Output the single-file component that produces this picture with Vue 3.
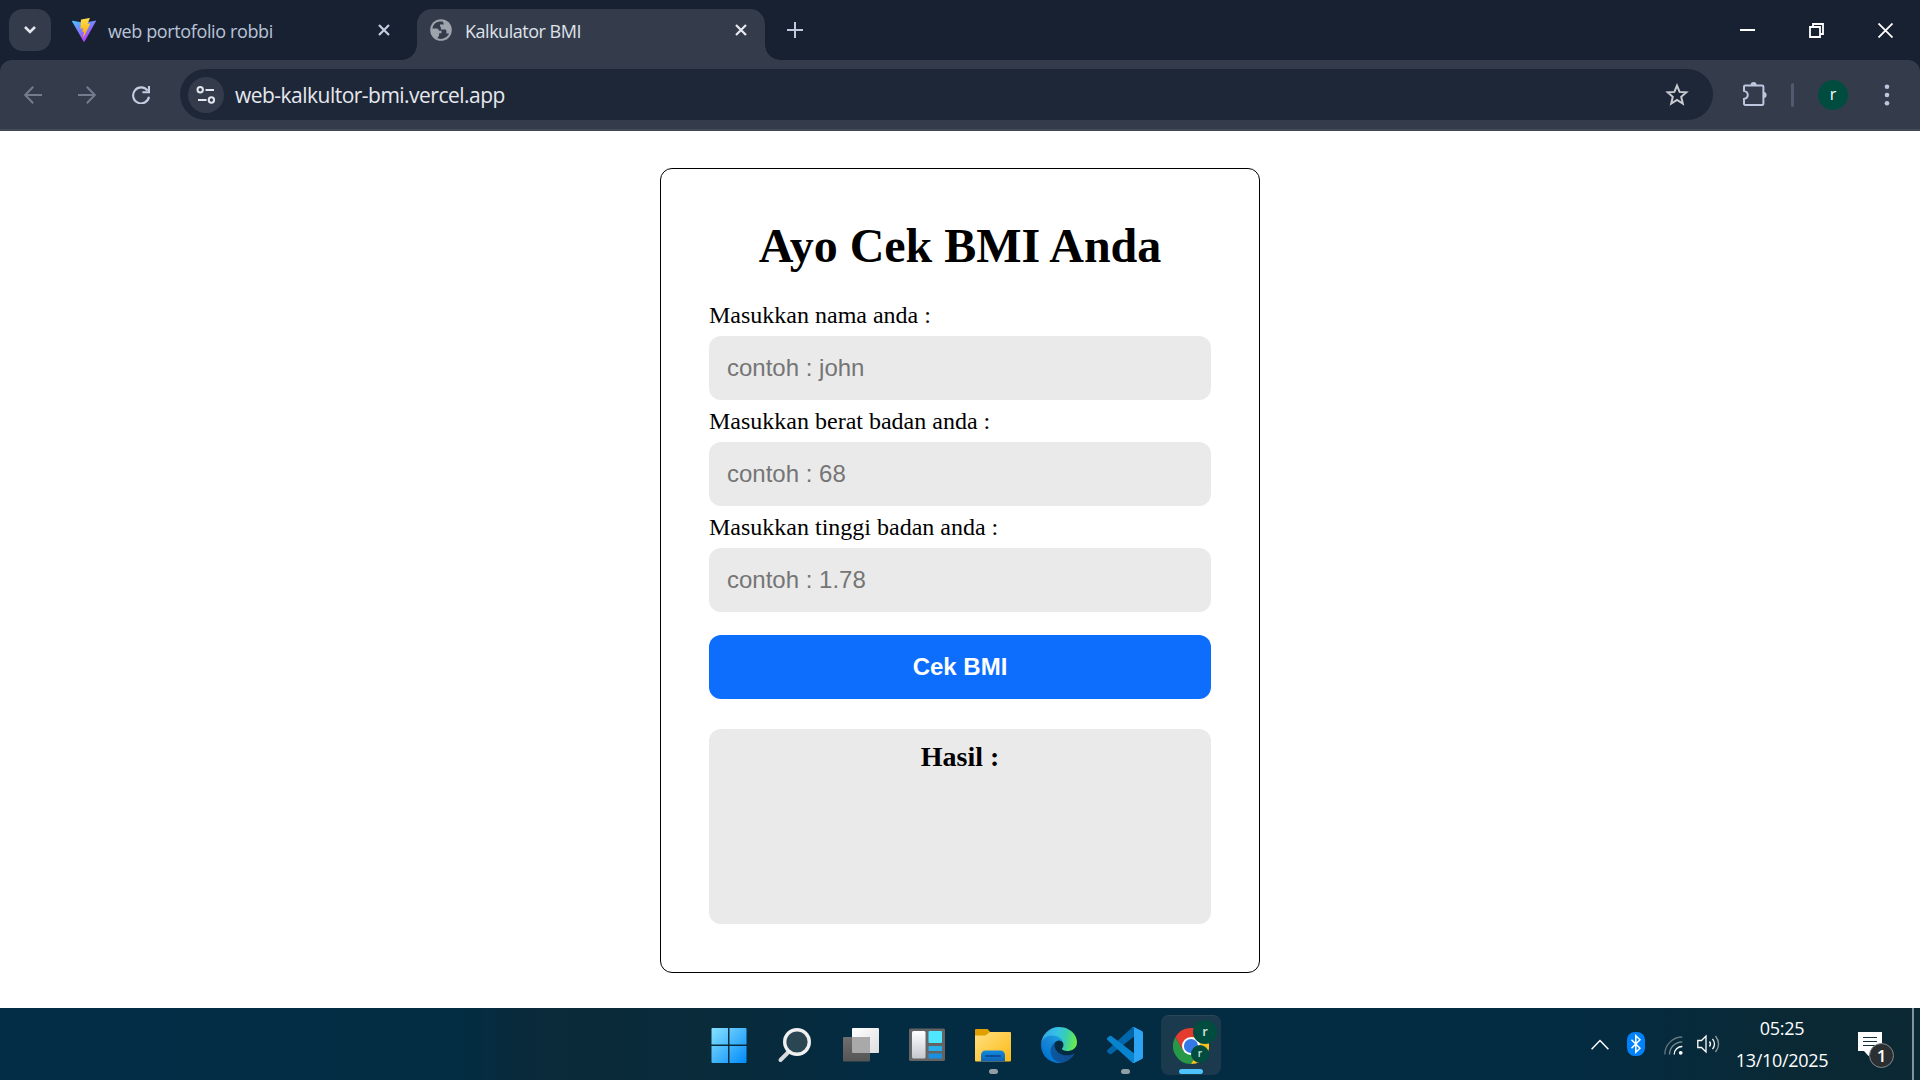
<script setup>
import { reactive } from 'vue'

const fields = [
  { key: 'nama', label: 'Masukkan nama anda :', hint: 'contoh : john' },
  { key: 'berat', label: 'Masukkan berat badan anda :', hint: 'contoh : 68' },
  { key: 'tinggi', label: 'Masukkan tinggi badan anda :', hint: 'contoh : 1.78' }
]
const form = reactive({ nama: '', berat: '', tinggi: '' })
</script>

<template>
  <div class="screen">
    <header class="tabs">
      <div class="tab-search">
        <svg width="14" height="10" viewBox="0 0 14 10"><path d="M2 2l5 5 5-5" fill="none" stroke="#e3e6ee" stroke-width="2.6" /></svg>
      </div>
      <div class="tab">
        <svg class="favicon" width="24" height="24" viewBox="0 0 24 24">
          <defs>
            <linearGradient id="viteA" x1="0" y1="0" x2=".6" y2="1"><stop offset="0" stop-color="#41c8ff" /><stop offset="1" stop-color="#bd34fe" /></linearGradient>
            <linearGradient id="viteB" x1="0" y1="0" x2="0" y2="1"><stop offset="0" stop-color="#ffe04a" /><stop offset="1" stop-color="#ffa800" /></linearGradient>
          </defs>
          <path d="M23.8 3.6L12.6 23.5a.6.6 0 0 1-1.1 0L.1 3.6a.6.6 0 0 1 .7-.9l11.2 2 11-2a.6.6 0 0 1 .8.9z" fill="url(#viteA)" />
          <path d="M17.4 0L9.2 1.6a.4.4 0 0 0-.3.3l-.5 8.6c0 .2.2.4.4.3l2.3-.5-.7 3.4c0 .2.2.4.4.3l1.4-.4-1.1 5.2c-.1.4.4.5.6.2l6.4-13c.1-.2-.1-.4-.3-.4l-2.4.5L17.8.4c0-.2-.2-.4-.4-.4z" fill="url(#viteB)" />
        </svg>
        <span class="tab-title t1">web portofolio robbi</span>
        <svg class="tab-close" width="12" height="12" viewBox="0 0 12 12"><path d="M1 1l10 10M11 1L1 11" stroke="#c5cde0" stroke-width="2.2" /></svg>
      </div>
      <div class="tab active">
        <svg class="favicon" width="22" height="22" viewBox="0 0 22 22">
          <circle cx="11" cy="11" r="10.8" fill="#9fa4ac" />
          <path d="M9.400 2.400A8.800 8.800 0 0 0 2.300 9.400h4.200c1.600 0 2.400.9 2.400 2.400h2.600v2.400H9.100v2.200c-.4 1.100-1.100 1.600-1.800 2.600a8.900 8.900 0 0 0 9.300-1.200c1.100-.9 2-2.100 2.500-3.400h-2.700v-2.200c0-1-.5-1.600-1.500-1.600h-4V7.800h-.9V5.600h3.600c.5-1.200-.4-2.100-1.200-3.200z" fill="#343c4c" />
        </svg>
        <span class="tab-title t2">Kalkulator BMI</span>
        <svg class="tab-close" width="12" height="12" viewBox="0 0 12 12"><path d="M1 1l10 10M11 1L1 11" stroke="#e8eaf2" stroke-width="2.2" /></svg>
      </div>
      <svg class="plus" width="16" height="16" viewBox="0 0 16 16"><path d="M8 0v16M0 8h16" stroke="#c0c8dc" stroke-width="2" /></svg>
      <div class="window-buttons">
        <svg width="15" height="15" viewBox="0 0 15 15"><path d="M0 7h15" stroke="#fff" stroke-width="2" /></svg>
        <svg width="15" height="15" viewBox="0 0 15 15"><path d="M1 4h10v10H1zM4 4V1h10v10h-3" fill="none" stroke="#fff" stroke-width="1.8" /></svg>
        <svg width="15" height="15" viewBox="0 0 15 15"><path d="M.5.5l14 14M14.5.5l-14 14" stroke="#fff" stroke-width="1.8" /></svg>
      </div>
    </header>

    <div class="strip">
      <nav class="toolbar">
        <svg class="nav-icon" width="18" height="18" viewBox="0 0 18 18"><path d="M18 9H1.500M9.200 .8L1.200 9l8 8.200" fill="none" stroke="#737b8c" stroke-width="2" /></svg>
        <svg class="nav-icon" width="18" height="18" viewBox="0 0 18 18"><path d="M0 9h16.500M8.800 .8l8 8.200-8 8.200" fill="none" stroke="#737b8c" stroke-width="2" /></svg>
        <svg class="nav-icon" width="18" height="18" viewBox="0 0 18 18"><path d="M15.600 4.700A8 8 0 1 0 17 10.800M17 0v6.200h-6.600" fill="none" stroke="#c3cce0" stroke-width="2.100" /></svg>
        <div class="address">
          <div class="site-info">
            <svg width="20" height="18" viewBox="0 0 20 18"><g fill="none" stroke="#e3e6ee" stroke-width="2"><circle cx="4.200" cy="3.800" r="2.700" /><path d="M9.500 4H18M2 14h8.500" /><circle cx="15.400" cy="14" r="2.700" /></g></svg>
          </div>
          <span class="url">web-kalkultor-bmi.vercel.app</span>
          <svg class="star" width="24" height="24" viewBox="0 0 24 24"><path d="M12 2.600l2.600 6.300 6.700.5-5.100 4.400 1.600 6.700-5.800-3.600-5.800 3.600 1.600-6.700L2.700 9.400l6.700-.5z" fill="none" stroke="#c8cad0" stroke-width="2" /></svg>
        </div>
        <svg class="puzzle" width="26" height="26" viewBox="0 0 26 26">
          <path d="M3.200 4.500h17a1.200 1.200 0 0 1 1.200 1.200v17a1.200 1.200 0 0 1-1.200 1.200h-17A1.200 1.200 0 0 1 2 22.700v-4.800c5-1.200 5-6.800 0-8V5.700a1.200 1.200 0 0 1 1.200-1.200z" fill="none" stroke="#bcc6de" stroke-width="2" />
          <path d="M8.600 4a3 3 0 0 1 6 0zM21.600 11a3 3 0 0 1 0 6z" fill="#bcc6de" />
        </svg>
        <i class="divider"></i>
        <span class="avatar">r</span>
        <svg class="dots" width="6" height="22" viewBox="0 0 6 22"><g fill="#bcc6de"><circle cx="3" cy="2.800" r="2.300" /><circle cx="3" cy="11" r="2.300" /><circle cx="3" cy="19.200" r="2.300" /></g></svg>
      </nav>
    </div>

    <main class="page">
      <section class="card">
        <h1>Ayo Cek BMI Anda</h1>
        <div v-for="f in fields" :key="f.key" class="field">
          <label :for="f.key">{{ f.label }}</label>
          <input :id="f.key" v-model="form[f.key]" :placeholder="f.hint" autocomplete="off" />
        </div>
        <button type="button">Cek BMI</button>
        <div class="result"><h3>Hasil :</h3></div>
      </section>
    </main>

    <footer class="taskbar">
      <div class="apps">
        <div class="app">
          <svg class="start" width="36" height="36" viewBox="0 0 36 36">
            <defs><linearGradient id="win" x1="0" y1="0" x2="36" y2="36" gradientUnits="userSpaceOnUse"><stop offset="0" stop-color="#8be3ff" /><stop offset="1" stop-color="#008bfa" /></linearGradient></defs>
            <path d="M1.500 1H17v16.500H.5V2a1 1 0 0 1 1-1zM18.500 1h16a1 1 0 0 1 1 1v15.500h-17zM.5 19H17v17H1.500a1 1 0 0 1-1-1zM18.500 19h17v16a1 1 0 0 1-1 1h-16z" fill="url(#win)" />
          </svg>
        </div>
        <div class="app">
          <svg width="36" height="36" viewBox="0 0 36 36"><path d="M12 24.500L3.500 33" stroke="#d9dadb" stroke-width="4" stroke-linecap="round" /><circle cx="20" cy="15" r="12.300" fill="#2b4653" stroke="#f0f0f0" stroke-width="3.400" /></svg>
        </div>
        <div class="app">
          <svg width="36" height="36" viewBox="0 0 36 36">
            <defs>
              <linearGradient id="tv" x1="0" y1="0" x2="1" y2="1"><stop offset="0" stop-color="#fff" /><stop offset="1" stop-color="#dedede" /></linearGradient>
              <linearGradient id="tb" x1="0" y1="0" x2="0" y2="1"><stop offset="0" stop-color="#6e6e6e" /><stop offset="1" stop-color="#555" /></linearGradient>
            </defs>
            <rect x="9" y="1" width="27" height="25" rx="1" fill="url(#tv)" />
            <rect y="10" width="27" height="24.500" rx="1" fill="url(#tb)" />
            <path d="M9 10h17a1 1 0 0 1 1 1v15H10a1 1 0 0 1-1-1z" fill="#a9a9a9" />
          </svg>
        </div>
        <div class="app">
          <svg width="36" height="36" viewBox="0 0 36 36">
            <defs><linearGradient id="wd" x1="0" y1="0" x2="0" y2="1"><stop offset="0" stop-color="#fff" /><stop offset="1" stop-color="#c3c8ce" /></linearGradient></defs>
            <rect y="1.500" width="36" height="32.500" rx="1.500" fill="#646464" />
            <rect x="3" y="4" width="13.500" height="27.500" rx="1.500" fill="url(#wd)" />
            <rect x="19.500" y="4" width="13.500" height="12" rx="1" fill="#50e6ff" />
            <rect x="19.500" y="19" width="13.500" height="5" rx=".8" fill="#29aeea" />
            <rect x="19.500" y="26.500" width="13.500" height="5" rx=".8" fill="#1b90e0" />
          </svg>
        </div>
        <div class="app">
          <svg width="36" height="36" viewBox="0 0 36 36">
            <defs>
              <linearGradient id="fo" x1="0" y1="0" x2="1" y2="1"><stop offset="0" stop-color="#ffe183" /><stop offset="1" stop-color="#fdb913" /></linearGradient>
              <linearGradient id="fb" x1="0" y1="0" x2="0" y2="1"><stop offset="0" stop-color="#128be0" /><stop offset="1" stop-color="#0f63b4" /></linearGradient>
            </defs>
            <path d="M0 3a1 1 0 0 1 1-1h10.500c1 0 1.700.5 2.300 1.200L16 6v5H0z" fill="#e0a000" />
            <path d="M0 8.500h9c1.200 0 2-.4 2.800-1.100l1.700-1.500c.7-.7 1.500-.9 2.300-.9H35a1 1 0 0 1 1 1v27.500a1 1 0 0 1-1 1H1a1 1 0 0 1-1-1z" fill="url(#fo)" />
            <path d="M6 34.500V28a4.500 4.500 0 0 1 4.500-4.500h15A4.500 4.500 0 0 1 30 28v6.500z" fill="url(#fb)" />
            <path d="M11 29h14" stroke="#0b4f96" stroke-width="2" stroke-linecap="round" />
          </svg>
          <i class="mark"></i>
        </div>
        <div class="app">
          <svg width="36" height="36" viewBox="0 0 256 256">
            <defs>
              <linearGradient id="e1" x1="63" y1="177" x2="241" y2="177" gradientUnits="userSpaceOnUse"><stop offset="0" stop-color="#0c59a4" /><stop offset="1" stop-color="#114a8b" /></linearGradient>
              <linearGradient id="e2" x1="157" y1="100" x2="46" y2="221" gradientUnits="userSpaceOnUse"><stop offset="0" stop-color="#1b9de2" /><stop offset=".5" stop-color="#1684d4" /><stop offset="1" stop-color="#0078d4" /></linearGradient>
              <linearGradient id="e3" x1="10" y1="60" x2="245" y2="110" gradientUnits="userSpaceOnUse"><stop offset="0" stop-color="#31a8df" /><stop offset=".4" stop-color="#35c1e8" /><stop offset=".7" stop-color="#39cfac" /><stop offset="1" stop-color="#68ea4c" /></linearGradient>
            </defs>
            <path d="M231 190.500a93.700 93.700 0 0 1-10.500 4.700 101.900 101.900 0 0 1-35.900 6.500c-47.300 0-88.500-32.600-88.500-74.300a31.500 31.500 0 0 1 16.400-27.300c-42.800 1.800-53.800 46.400-53.800 72.500 0 74 68.100 81.400 82.800 81.400 7.900 0 19.800-2.300 27-4.600l1.300-.4a128.300 128.300 0 0 0 66.600-52.800 4 4 0 0 0-5.400-5.700z" fill="url(#e1)" />
            <path d="M105.700 241.400a79.200 79.200 0 0 1-22.700-21.300 80.700 80.700 0 0 1 29.500-120c3.100-1.500 8.500-4.100 15.600-4a32.400 32.400 0 0 1 25.700 13 31.900 31.900 0 0 1 6.300 18.700c0-.2 24.500-79.600-80-79.600-43.900 0-80 41.700-80 78.200a130.200 130.200 0 0 0 12.100 56 128 128 0 0 0 156.400 67 75.500 75.500 0 0 1-62.800-8z" fill="url(#e2)" />
            <path d="M152.300 148.900c-.8 1-3.300 2.500-3.300 5.700 0 2.600 1.700 5.100 4.700 7.200 14.400 10 41.500 8.700 41.600 8.700a59.600 59.600 0 0 0 30.300-8.300 61.400 61.400 0 0 0 30.400-52.900c.3-22.400-8-37.300-11.300-43.900C223.500 23.900 177.700 0 128 0A128 128 0 0 0 0 126.200c.5-36.500 36.800-66 80-66 3.500 0 23.500.3 42 10 16.300 8.600 24.900 19 30.800 29.200 6.200 10.700 7.300 24.100 7.300 29.500s-2.700 13.300-7.800 20z" fill="url(#e3)" />
          </svg>
        </div>
        <div class="app">
          <svg width="36" height="36" viewBox="0 0 100 100">
            <path d="M96.500 10.800L75.900.9a6.200 6.200 0 0 0-7.100 1.200L1.300 63.600a4.200 4.200 0 0 0 0 6.200l5.500 5a4.200 4.200 0 0 0 5.300.2l81.200-61.600c2.700-2.100 6.700-.1 6.700 3.300v-.2a6.200 6.200 0 0 0-3.500-5.700z" fill="#0065a9" />
            <path d="M96.500 89.200l-20.600 9.900a6.200 6.200 0 0 1-7.100-1.200L1.300 36.400a4.200 4.200 0 0 1 0-6.200l5.500-5a4.200 4.200 0 0 1 5.300-.2l81.200 61.600c2.700 2.100 6.700.1 6.700-3.300v.2a6.200 6.200 0 0 1-3.500 5.700z" fill="#0784cd" />
            <path d="M75.900 99.100a6.200 6.200 0 0 1-7.100-1.200c2.300 2.300 6.200.7 6.200-2.600V4.700c0-3.300-3.900-4.900-6.200-2.600A6.200 6.200 0 0 1 75.900.9l20.600 9.900a6.200 6.200 0 0 1 3.500 5.600v67.200a6.200 6.200 0 0 1-3.500 5.600z" fill="#2ba4f4" />
          </svg>
          <i class="mark"></i>
        </div>
        <div class="app current">
          <svg width="36" height="36" viewBox="0 0 36 36">
            <path d="M18 18l-7.800 4.500L2.400 9A18 18 0 0 0 18 36l7.800-13.500z" fill="#279847" />
            <path d="M18 9h15.600A18 18 0 0 1 18 36l7.800-13.500z" fill="#fcc31e" />
            <path d="M18 18l-7.800 4.500L2.400 9A18 18 0 0 1 33.600 9H18z" fill="#e33b2e" />
            <circle cx="18" cy="18" r="9" fill="#fff" /><circle cx="18" cy="18" r="7.100" fill="#3479e8" />
          </svg>
          <span class="profile big">r</span>
          <span class="profile small">r</span>
          <i class="mark"></i>
        </div>
      </div>
      <div class="tray">
        <svg class="chev" width="18" height="11" viewBox="0 0 18 11"><path d="M.6 10.200L9 1.600l8.400 8.600" fill="none" stroke="#fff" stroke-width="1.500" /></svg>
        <svg class="bt" width="18" height="24" viewBox="0 0 18 24"><rect width="18" height="24" rx="8" fill="#0082fc" /><path d="M4.500 7.800l8.500 8.400-4.200 4V3.800l4.200 4-8.500 8.400" fill="none" stroke="#fff" stroke-width="1.500" /></svg>
        <svg class="wifi" width="19" height="19" viewBox="0 0 19 19"><g fill="none" stroke-width="1.300"><path d="M.8 18.500A17.500 17.500 0 0 1 18.300 1" stroke="#66777f" /><path d="M5.500 18.500A12.800 12.800 0 0 1 18.300 5.800" stroke="#7d8c94" /><path d="M10.200 18.500a8 8 0 0 1 8.100-8" stroke="#fff" /></g><circle cx="16.700" cy="16.800" r="1.900" fill="#fff" /></svg>
        <svg class="sound" width="23" height="20" viewBox="0 0 23 20"><g fill="none" stroke="#fff" stroke-width="1.300"><path d="M.8 6.500h3.700L9 2v16l-4.500-4.500H.8z" /><path d="M12.500 7.500q2 2.500 0 5M15.500 4.800q4 5.200 0 10.400" /><path d="M18.500 2q6.200 8 0 16" stroke="#8c999f" /></g></svg>
        <div class="clock"><span class="time">05:25</span><span class="date">13/10/2025</span></div>
        <div class="notice">
          <svg width="24" height="24" viewBox="0 0 24 24"><path d="M0 0h24v19H15l-4.500 5L6 19H0z" fill="#fff" /><path d="M5 5.500h14M5 9.500h14M5 13.500h14" stroke="#12303e" stroke-width="1.200" /></svg>
          <span class="count">1</span>
        </div>
        <i class="peek"></i>
      </div>
    </footer>
  </div>
</template>

<style>
body { margin: 0; overflow: hidden; }
</style>

<style scoped>
* { box-sizing: border-box; }
svg { display: block; flex: none; }
.screen { width: 1920px; height: 1080px; display: flex; flex-direction: column; background: #fff; overflow: hidden; font-family: "Open Sans", "Noto Sans", sans-serif; }

.tabs { height: 60px; flex: none; display: flex; align-items: center; background: #182131; padding-left: 9px; }
.tab-search { width: 42px; height: 42px; border-radius: 14px; background: #343c4c; display: flex; align-items: center; justify-content: center; }
.tab { width: 366px; height: 60px; display: flex; align-items: center; padding: 0 27px 0 21px; }
.tab-title { margin-left: 12px; font-size: 18px; line-height: 24px; padding-top: 1px; white-space: nowrap; color: #b9c3d8; }
.t1 { letter-spacing: -.38px; }
.t2 { letter-spacing: -.48px; margin-left: 13px; }
.tab-close { margin-left: auto; }
.tab.active { position: relative; width: 348px; height: 51px; align-self: flex-end; padding: 0 18px 9px 13px; border-radius: 15px 15px 0 0; background: #343c4c; }
.tab.active .tab-title { color: #dfe2ea; }
.tab.active::before, .tab.active::after { content: ""; position: absolute; bottom: 0; width: 15px; height: 15px; }
.tab.active::before { left: -15px; background: radial-gradient(circle at 0 0, transparent 14.500px, #343c4c 15px); }
.tab.active::after { right: -15px; background: radial-gradient(circle at 100% 0, transparent 14.500px, #343c4c 15px); }
.plus { margin-left: 22px; }
.window-buttons { margin-left: auto; display: flex; gap: 54px; padding-right: 27px; }

.strip { height: 71px; flex: none; background: #182131; }
.toolbar { height: 71px; display: flex; align-items: center; padding: 0 30px 0 24px; background: #343c4c; border-radius: 12px 12px 0 0; border-bottom: 2px solid #414957; }
.nav-icon { margin-right: 36px; }
.nav-icon:nth-child(3) { margin-right: 30px; }
.address { width: 1533px; height: 51px; border-radius: 26px; background: #1e2737; display: flex; align-items: center; padding: 0 24px 0 8px; }
.site-info { width: 36px; height: 36px; border-radius: 50%; background: #343c4c; display: flex; align-items: center; justify-content: center; }
.url { margin-left: 11px; font-size: 21px; line-height: 28px; letter-spacing: -.52px; color: #e6e8ee; }
.star { margin-left: auto; }
.puzzle { margin: 0 23px 2px 29px; }
.divider { width: 3px; height: 24px; border-radius: 2px; background: #505a70; }
.avatar { width: 30px; height: 30px; margin-left: 24px; border-radius: 50%; background: #004d40; color: #fff; font-size: 16px; line-height: 28px; text-align: center; }
.dots { margin-left: auto; }

.page { flex: 1; display: flex; align-items: flex-start; justify-content: center; padding-top: 37px; }
.card { width: 600px; border: 1px solid #000; border-radius: 12px; padding: 48px; display: flex; flex-direction: column; font-family: "Liberation Serif", "Times New Roman", serif; color: #000; }
h1 { margin: 0 0 19px; font-size: 48px; line-height: 58px; letter-spacing: -.05px; text-align: center; }
.field { display: flex; flex-direction: column; gap: 7px; padding-top: 7px; }
label { font-size: 24px; line-height: 28px; }
input { width: 100%; height: 64px; border: 0; border-radius: 12px; outline: 0; padding: 0 18px; background: #eaeaea; font: 24px "Liberation Sans", Arial, sans-serif; }
input::placeholder { color: #757575; opacity: 1; }
button { height: 64px; margin: 23px 0 30px; padding: 0; border: 0; border-radius: 12px; background: #0d6efd; color: #fff; font: bold 24px "Liberation Sans", Arial, sans-serif; }
.result { height: 195px; padding-top: 12px; border-radius: 12px; background: #eaeaea; }
h3 { margin: 0; font-size: 28px; line-height: 32px; text-align: center; }

.taskbar { height: 72px; flex: none; display: flex; padding-left: 699px; background: linear-gradient(90deg, #032d47 0, #022d42 24%, #0b2a3a 28%, #092b3a 37%, #032b42 46%, #032b42 82%, #0a2935 93%, #0b2833 100%); }
.apps { display: flex; align-items: center; gap: 6px; }
.app { position: relative; width: 60px; height: 60px; margin-bottom: -2px; display: flex; align-items: center; justify-content: center; }
.start { margin-right: 1px; }
.app.current { background: #1b3a4e; border-radius: 8px; border-top: 1px solid #294759; }
.mark { position: absolute; left: 26px; bottom: 1px; width: 9px; height: 5px; border-radius: 3px; background: #929ea6; }
.current .mark { left: 18px; width: 24px; background: #4cc2ff; }
.profile { position: absolute; border-radius: 50%; background: #004d40; color: #d4e2df; text-align: center; font-weight: 600; }
.big { left: 32px; top: 4px; width: 24px; height: 24px; font-size: 13px; line-height: 22px; }
.small { left: 30px; top: 29px; width: 18px; height: 18px; font-size: 10px; line-height: 16px; }

.tray { margin-left: auto; display: flex; align-items: center; }
.chev { margin-right: 18px; }
.bt { margin-right: 19px; }
.wifi { margin: 3px 14px 0 0; }
.sound { margin-right: 14px; }
.clock { width: 96px; display: flex; flex-direction: column; align-items: center; color: #fff; font-size: 18px; line-height: 32px; white-space: nowrap; }
.time { letter-spacing: -.3px; }
.date { letter-spacing: -.3px; }
.notice { position: relative; margin: 0 30px 0 28px; }
.count { position: absolute; left: 11px; top: 11px; width: 25px; height: 25px; border: 1px solid #83898c; border-radius: 50%; background: #2b2f32; color: #fff; font-size: 17px; font-weight: 600; line-height: 23px; text-align: center; }
.peek { align-self: stretch; width: 2px; margin-right: 6px; background: #84939b; }
</style>
